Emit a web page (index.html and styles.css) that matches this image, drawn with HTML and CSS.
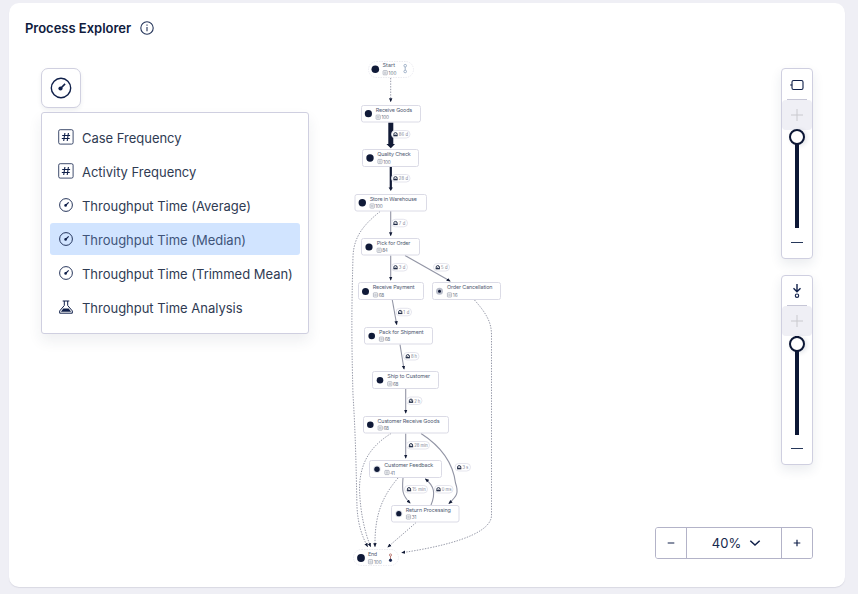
FILE: index.html
```html
<!DOCTYPE html>
<html lang="en">
<head>
<meta charset="utf-8">
<title>Process Explorer</title>
<link rel="stylesheet" href="styles.css">
</head>
<body>
<svg class="defs" width="0" height="0" aria-hidden="true">
  <defs>
    <symbol id="gauge" viewBox="0 0 16 16"><circle cx="8" cy="8" r="6.4" fill="none" stroke="currentColor" stroke-width=".9"/><circle cx="7.6" cy="8.4" r="1.3" fill="currentColor"/><path d="M8 8l2.700-2.700" stroke="currentColor" stroke-width="1.1"/></symbol>
    <symbol id="hash" viewBox="0 0 16 16"><rect x=".7" y=".7" width="14.4" height="14.4" rx="1.5" fill="none" stroke="currentColor" opacity=".8"/><path d="M6.9 4 5.7 12M10.4 4 9.2 12M4.2 6.5h7.9M3.8 9.5h7.9" fill="none" stroke="currentColor" stroke-width="1.1"/></symbol>
    <symbol id="flask" viewBox="0 0 16 16"><path d="M4.700 2h6.600M6.300 2v4.500L1.700 11.900v2.300h12.600v-2.300L9.700 6.500V2" fill="none" stroke="currentColor"/><path d="M5.300 9.600h5.400l2.400 3.200H2.900z" fill="currentColor"/></symbol>
    <g id="count"><rect class="count-box" x=".4" y=".4" width="4.2" height="4.2" rx=".6"/><path d="M1.3 2h2.4M1.3 3.1h2.4M2 1.3v2.4M3.1 1.3v2.4" stroke="#9da5b2" stroke-width=".35"/></g>
    <g id="time"><path d="M.9 3.9V2.2Q1 .9 2.5.9T4.1 2.2V3.9z" fill="#fff" stroke="#14203c" stroke-width=".9"/><path d="M.3 4.1h4.4M2.2 2.9l1-1" stroke="#14203c" stroke-width=".8"/></g>
    <marker id="arrow" viewBox="0 0 5 4" refX="4" refY="2" markerWidth="4.2" markerHeight="4.2" markerUnits="userSpaceOnUse" orient="auto"><path class="head" d="M0 0 5 2 0 4z"/></marker>
  </defs>
</svg>
<main class="card">
  <header class="header"><h1>Process Explorer</h1>
    <svg class="info" viewBox="0 0 14 14"><circle cx="7" cy="7" r="6.2"/><path d="M7 6v4.3M7 3.6v1.2"/></svg>
  </header>
  <div class="body">
    <section class="kpi">
      <button class="kpi-button" aria-label="KPI"><svg viewBox="0 0 22 22"><circle cx="11" cy="11" r="9.7" fill="none" stroke="currentColor" stroke-width="1.4"/><circle cx="10.5" cy="11.5" r="2.1" fill="currentColor"/><path d="m10.5 11.5 4.600-4.600" stroke="currentColor" stroke-width="1.6"/></svg></button>
      <ul class="menu">
        <li><svg><use href="#hash"/></svg><span>Case Frequency</span></li>
        <li><svg><use href="#hash"/></svg><span>Activity Frequency</span></li>
        <li><svg><use href="#gauge"/></svg><span>Throughput Time (Average)</span></li>
        <li class="selected"><svg><use href="#gauge"/></svg><span>Throughput Time (Median)</span></li>
        <li><svg><use href="#gauge"/></svg><span>Throughput Time (Trimmed Mean)</span></li>
        <li><svg><use href="#flask"/></svg><span>Throughput Time Analysis</span></li>
      </ul>
    </section>
    <svg class="graph" viewBox="340 50 180 530">
      <g class="dotted">
        <path d="M390.7 78V101.5" marker-end="url(#arrow)"/>
        <path d="M380 211.5C366 223 353.5 235 353 257C351.5 310 351.5 340 353 395C356 440 356.500 490 357 507C358 525 362 536 367.500 546.500" marker-end="url(#arrow)"/>
        <path d="M391 433.500C371 446 360 462 359.500 488C360 510 364 530 370.500 546.500" marker-end="url(#arrow)"/>
        <path d="M398 478C382 497 374.500 515 375 546.500" marker-end="url(#arrow)"/>
        <path d="M416 522.500C409 529 398 538 388 547" marker-end="url(#arrow)"/>
        <path d="M474.500 300C486 313 491.500 322 491.500 335V516C490 536 440 547 402 552.700" marker-end="url(#arrow)"/>
      </g>
      <g class="solid">
        <path d="M390.700 211V235.500" marker-end="url(#arrow)"/>
        <path d="M390.700 255.500V280" marker-end="url(#arrow)"/>
        <path d="M405 255.500 450 281" marker-end="url(#arrow)"/>
        <path d="M392.300 300 396.700 324.500" marker-end="url(#arrow)"/>
        <path d="M400 344.500 404 369" marker-end="url(#arrow)"/>
        <path d="M405.700 389V413" marker-end="url(#arrow)"/>
        <path d="M405.700 433.500V458" marker-end="url(#arrow)"/>
        <path d="M421 433.500C442 447 453 463 455.500 483C459 493 457 496 449 503.500" marker-end="url(#arrow)"/>
        <path d="M403 478C402 490 402 495 410 503" marker-end="url(#arrow)"/>
        <path d="M431 505C436 493 434 486 425.500 479" marker-end="url(#arrow)"/>
      </g>
      <path class="heavy" d="M388.300 122.500h5v21.500h1.700l-4.200 4.300-4.400-4.300h1.900z"/>
      <path class="heavy" d="M389.700 166.500h2.200v21h1l-2.100 3.500-2.200-3.500h1.100z"/>

      <g class="pill">
        <rect x="391.500" y="130.500" width="18.500" height="7.500" rx="3.700"/><use href="#time" x="393" y="131.700"/><text x="398.800" y="136" textLength="9.200">86 d</text>
        <rect x="391.500" y="174.500" width="18.500" height="7.500" rx="3.700"/><use href="#time" x="393" y="175.700"/><text x="398.800" y="180" textLength="9.200">28 d</text>
        <rect x="391.500" y="219.300" width="16" height="7.500" rx="3.700"/><use href="#time" x="393" y="220.500"/><text x="398.800" y="224.800" textLength="6.500">7 d</text>
        <rect x="391.500" y="263.500" width="16" height="7.500" rx="3.700"/><use href="#time" x="393" y="264.700"/><text x="398.800" y="269" textLength="6.500">3 d</text>
        <rect x="433.500" y="263.500" width="16" height="7.500" rx="3.700"/><use href="#time" x="435.300" y="264.700"/><text x="441" y="269" textLength="6.500">5 d</text>
        <rect x="396" y="308.300" width="15.500" height="7.500" rx="3.700"/><use href="#time" x="397.700" y="309.500"/><text x="403.300" y="313.800" textLength="6">1 d</text>
        <rect x="403.500" y="352.500" width="15.500" height="7.500" rx="3.700"/><use href="#time" x="405.300" y="353.700"/><text x="411" y="358" textLength="6">8 h</text>
        <rect x="406.500" y="397" width="15.500" height="7.500" rx="3.700"/><use href="#time" x="408.500" y="398.200"/><text x="414.200" y="402.500" textLength="6">2 h</text>
        <rect x="406.500" y="441.500" width="23" height="7.500" rx="3.700"/><use href="#time" x="408.500" y="442.700"/><text x="414.200" y="447" textLength="13.500">28 min</text>
        <rect x="455" y="463.500" width="15.500" height="7.500" rx="3.700"/><use href="#time" x="456.700" y="464.700"/><text x="462.500" y="469" textLength="5.700">3 s</text>
        <rect x="404.500" y="485.500" width="23" height="7.500" rx="3.700"/><use href="#time" x="406.500" y="486.700"/><text x="412.200" y="491" textLength="13.500">15 min</text>
        <rect x="434.500" y="485.500" width="18.500" height="7.500" rx="3.700"/><use href="#time" x="436" y="486.700"/><text x="441.700" y="491" textLength="9.700">0 ms</text>
      </g>

      <g class="node terminal">
        <rect x="368.500" y="61.500" width="45" height="16" rx="8"/><circle cx="375.300" cy="69.300" r="3.800"/>
        <text x="382.500" y="67.300" textLength="12.500">Start</text><use href="#count" x="382.700" y="70.200"/><text class="num" x="388.500" y="74.600" textLength="8">100</text>
        <rect x="353.500" y="549.500" width="45" height="16" rx="8"/><circle cx="361" cy="558" r="3.900"/>
        <text x="368" y="556.300" textLength="9">End</text><use href="#count" x="368" y="559.200"/><text class="num" x="374" y="563.500" textLength="7.700">100</text>
      </g>
      <g class="trend"><circle cx="405.200" cy="65.700" r="1.300"/><path d="M405.200 67V70"/><circle cx="405.200" cy="71.500" r="1.300"/></g>
      <g class="trend end"><circle cx="390.500" cy="555" r="1.100"/><path d="M390.500 556V559"/><circle class="full" cx="390.500" cy="560.300" r="1.200"/></g>
      <g class="node">
        <rect x="361.500" y="105.500" width="59" height="16.500" rx="2"/><circle cx="368.400" cy="113.700" r="3.600"/><text x="375.700" y="112.300" textLength="36.500">Receive Goods</text><use href="#count" x="375.700" y="114.700"/><text class="num" x="381.500" y="119.200" textLength="7.500">100</text>
        <rect x="362.500" y="149.500" width="56" height="17" rx="2"/><circle cx="370" cy="158" r="3.700"/><text x="377.300" y="156.300" textLength="33.500">Quality Check</text><use href="#count" x="377.500" y="159"/><text class="num" x="383.300" y="163.500" textLength="7.500">100</text>
        <rect x="355" y="194.500" width="71.500" height="16.500" rx="2"/><circle cx="362.300" cy="202.700" r="3.700"/><text x="369.700" y="201.200" textLength="47.200">Store in Warehouse</text><use href="#count" x="369.700" y="203.500"/><text class="num" x="375.300" y="208" textLength="7.500">100</text>
        <rect x="361.500" y="238.500" width="58" height="16.500" rx="2"/><circle cx="369" cy="247" r="3.600"/><text x="376.700" y="245.200" textLength="33.700">Pick for Order</text><use href="#count" x="376.700" y="247.800"/><text class="num" x="382.300" y="252.300" textLength="5.500">84</text>
        <rect x="358.500" y="282.500" width="65" height="17" rx="2"/><circle cx="365.500" cy="291.500" r="3.500"/><text x="372.700" y="289.400" textLength="41.800">Receive Payment</text><use href="#count" x="373" y="292.400"/><text class="num" x="378.700" y="296.900" textLength="5.500">68</text>
        <rect x="432.500" y="282.500" width="68" height="17" rx="2"/><circle class="halo" cx="439.500" cy="291.300" r="3.500"/><circle cx="439.500" cy="291.300" r="1.500"/><text x="447" y="289.400" textLength="45.500">Order Cancellation</text><use href="#count" x="447" y="292.400"/><text class="num" x="452.700" y="296.900" textLength="5">16</text>
        <rect x="364.500" y="327.500" width="68" height="16.500" rx="2"/><circle cx="371.700" cy="336" r="3.300"/><text x="379" y="334.200" textLength="44.500">Pack for Shipment</text><use href="#count" x="379" y="336.700"/><text class="num" x="384.700" y="341.200" textLength="5.500">68</text>
        <rect x="372.500" y="371.500" width="66" height="17" rx="2"/><circle cx="380" cy="380.300" r="3.300"/><text x="387.300" y="378.300" textLength="42.700">Ship to Customer</text><use href="#count" x="387.300" y="381.300"/><text class="num" x="393" y="385.800" textLength="5.500">68</text>
        <rect x="363.500" y="416.500" width="85" height="16.500" rx="2"/><circle cx="370.300" cy="424.700" r="3.300"/><text x="377.500" y="423.200" textLength="62">Customer Receive Goods</text><use href="#count" x="377.700" y="425.500"/><text class="num" x="383.400" y="430" textLength="5.500">68</text>
        <rect x="369.500" y="460.500" width="72" height="17" rx="2"/><circle class="halo light" cx="377" cy="469.300" r="3.700"/><circle cx="377" cy="469.300" r="2.700"/><text x="384.300" y="467.200" textLength="49">Customer Feedback</text><use href="#count" x="384.500" y="470"/><text class="num" x="390.200" y="474.500" textLength="4.700">41</text>
        <rect x="391.500" y="505.500" width="67.500" height="16.500" rx="2"/><circle class="halo light" cx="398.800" cy="513.700" r="3.600"/><circle cx="398.800" cy="513.700" r="2.600"/><text x="405.800" y="512.200" textLength="45">Return Processing</text><use href="#count" x="406" y="514.500"/><text class="num" x="411.700" y="519" textLength="4.700">31</text>
      </g>
    </svg>
    <aside class="controls">
      <div class="slider">
        <svg class="kind" viewBox="0 0 16 16"><rect x="3" y="3.500" width="11" height="9" rx="1.500"/><path d="M1.200 8h2"/></svg>
        <span class="more"><svg viewBox="0 0 12 12"><path d="M0 6h12M6 0v12"/></svg></span>
        <span class="track"><i class="knob"></i></span>
        <span class="less"></span>
      </div>
      <div class="slider connections">
        <svg class="kind" viewBox="0 0 16 16"><path d="M8 1v7.500M4.500 5.300 8 8.800l3.500-3.500" stroke-width="1.400"/><circle cx="8" cy="12.700" r="1.700"/></svg>
        <span class="more"><svg viewBox="0 0 12 12"><path d="M0 6h12M6 0v12"/></svg></span>
        <span class="track"><i class="knob"></i></span>
        <span class="less"></span>
      </div>
      <div class="zoom">
        <button aria-label="Zoom out"><svg viewBox="0 0 8 8"><path d="M.7 4h6.600"/></svg></button>
        <button class="level">40%<svg class="chevron" viewBox="0 0 12 12"><path d="m1.300 3.700 4.700 4.300 4.700-4.300"/></svg></button>
        <button aria-label="Zoom in"><svg viewBox="0 0 8 8"><path d="M.7 4h6.600M4 .7v6.600"/></svg></button>
      </div>
    </aside>
  </div>
</main>
</body>
</html>
```
FILE: styles.css
```css
* { box-sizing: border-box; }
body { margin: 0; height: 594px; padding: 3px 13px 7px 9px; overflow: hidden; background: #efeff5; color: #0f1b3d; font-family: Inter, sans-serif; }
.defs { display: block; height: 0; }
.card { height: 584px; background: #fff; border-radius: 10px; box-shadow: 0 1px 1px #d9d9e3; }
.header { display: flex; align-items: center; gap: 9px; height: 47px; padding: 3px 16px 0; }
h1 { margin: 0; font-size: 13px; line-height: 20px; font-weight: 600; letter-spacing: -.02px; }
.info { width: 14px; height: 14px; fill: none; stroke: #26365b; stroke-width: 1.1; }
.body { display: flex; align-items: flex-start; padding-left: 32px; }
.kpi { width: 268px; margin-top: 18px; flex: none; }
.kpi-button { display: grid; place-items: center; width: 40px; height: 40px; padding: 0; color: #10204a; background: #fff; border: 1px solid #d0d0e0; border-radius: 7px; box-shadow: 0 2px 4px #20305014; }
.kpi-button svg { width: 22px; height: 22px; }
.menu { list-style: none; margin: 4px 0 0; padding: 8px; height: 222px; border: 1px solid #cfcfe0; border-radius: 3px; box-shadow: 0 7px 14px #20305014; background: #fff; }
.menu li { display: flex; align-items: center; gap: 8px; height: 32px; margin-bottom: 2px; padding-left: 8px; border-radius: 3px; font-size: 13px; letter-spacing: -.02px; color: #2f3b53; white-space: nowrap; }
.menu svg { width: 16px; height: 16px; flex: none; color: #10204a; }
.menu span { padding-top: 1px; }
.menu .selected { background: #d1e4ff; color: #40547a; }
.graph { display: block; flex: none; width: 180px; height: 530px; margin-left: 31px; font-family: Inter, sans-serif; }
.dotted path { fill: none; stroke: #9699a8; stroke-width: 1; stroke-dasharray: 1.4 1.3; }
.solid path { fill: none; stroke: #9295a5; stroke-width: 1.1; }
.heavy, .head { fill: #111a36; }
.pill rect { fill: #fff; stroke: #dedee8; stroke-width: .8; }
.pill text { fill: #7b8294; font-size: 4.2px; }
.node rect { fill: #fff; stroke: #dbdbe6; stroke-width: 1; }
.terminal rect { stroke: #e4e4eb; stroke-width: .7; stroke-dasharray: 1.5 1; }
#count .count-box { fill: #fff; stroke: #8d93a4; stroke-width: .6; stroke-dasharray: none; }
.node circle { fill: #101a38; }
.node .halo { fill: #b9bdca; }
.node .light { fill: #dfe2ea; }
.node text { fill: #505b72; font-size: 5.4px; }
.node .num { fill: #6d7587; font-size: 4.7px; }
.trend { fill: #fff; stroke: #8ea2bd; stroke-width: .8; }
.end { stroke: #b46a61; }
.end .full { fill: #10204a; stroke: #10204a; }
.controls { display: flex; flex-direction: column; align-items: flex-end; width: 158px; margin: 18px 0 0 135px; }
.slider { display: flex; flex-direction: column; align-items: center; width: 32px; height: 191px; border: 1px solid #cfcfe0; border-radius: 4px; background: #fff; box-shadow: 0 5px 12px #20305018; }
.connections { height: 190px; margin-top: 16px; }
.kind { width: 16px; height: 16px; margin: 8px 0 7px; flex: none; fill: none; stroke: #10204a; stroke-width: 1.1; }
.connections .kind { margin: 7px 0; }
.more { position: relative; display: grid; place-items: center; width: 30px; height: 30px; border-radius: 4px; background: #efeff5; }
.more::before { content: ""; position: absolute; top: -1px; left: 5px; width: 20px; height: 1px; background: #c6c6d6; }
.more svg { width: 12px; height: 12px; stroke: #c9c9ce; stroke-width: 1; }
.track { position: relative; width: 4px; height: 98px; background: #0c1735; }
.connections .track { height: 99px; }
.knob { position: absolute; top: -1px; left: -6px; width: 16px; height: 16px; border: 2px solid #0c1735; border-radius: 50%; background: #fff; box-shadow: 2px 1px 4px #20305020; }
.connections .knob { top: 0; }
.less { width: 12px; height: 1px; margin-top: 14px; background: #26375a; }
.connections .less { margin-top: 13px; }
.zoom { display: grid; grid-template-columns: 30px 96px 30px; width: 158px; height: 32px; margin-top: 62px; border: 1px solid #b3b3c8; border-radius: 3px; overflow: hidden; }
.zoom button { display: flex; align-items: center; justify-content: center; padding: 0; border: 0; background: #fff; color: #15284d; font: 13px Inter, sans-serif; }
.zoom .level { gap: 8px; padding-left: 5px; border: solid #b3b3c8; border-width: 0 1px; }
.zoom svg { width: 8px; height: 8px; fill: none; stroke: #10204a; stroke-width: 1.2; }
.zoom .chevron { width: 12px; height: 12px; stroke-width: 1.5; }
```
